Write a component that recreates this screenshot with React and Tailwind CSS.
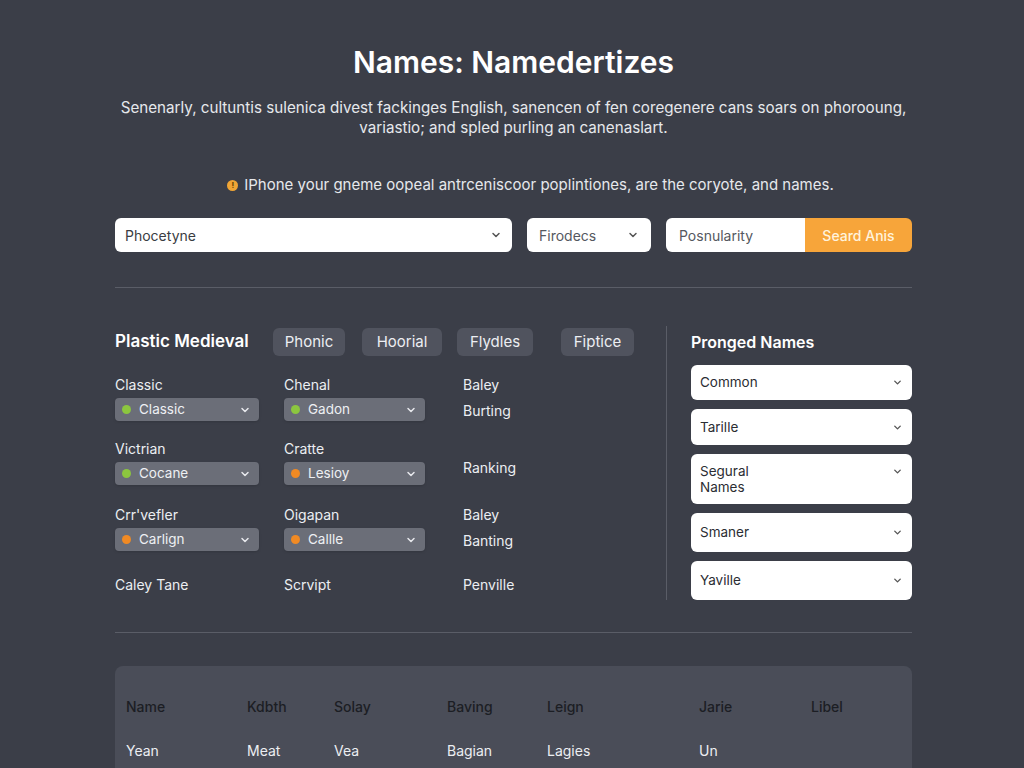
import { ChevronDown } from "lucide-react";

const font = { fontFamily: "Inter, 'Noto Sans', sans-serif" };

function Chip({ label, w }) {
  return (
    <span className={"flex h-[28px] items-center justify-center rounded-md bg-[#50535e] text-[15px] text-[#eceef2] " + w}>
      {label}
    </span>
  );
}

function DotSelect({ value, dot }) {
  return (
    <div className="flex h-[23px] items-center rounded-[4px] bg-[#6b6e78] pl-[7px] pr-2 text-[13.5px] text-[#eef0f3] shadow-sm">
      <span className={"mr-[8px] h-[9px] w-[9px] rounded-full " + dot} />
      <span className="flex-1">{value}</span>
      <ChevronDown size={12} strokeWidth={3} className="text-[#e7e8ec]" />
    </div>
  );
}

function Field({ label, value, dot, w }) {
  return (
    <div className={"flex flex-col gap-[4px] " + w}>
      <span className="text-[14px] leading-[18px] text-[#eceef2]">{label}</span>
      <DotSelect value={value} dot={dot} />
    </div>
  );
}

function WhiteSelect({ label, h, tall }) {
  return (
    <div
      className={
        "flex rounded-md bg-white px-[9px] text-[13.5px] text-[#2b2d33] " +
        h +
        (tall ? " items-start pt-[9px] leading-[16px]" : " items-center")
      }
    >
      <span className="flex-1">{label}</span>
      <ChevronDown size={11} strokeWidth={3} className={"text-[#555] " + (tall ? "mt-[3px]" : "")} />
    </div>
  );
}

const green = "bg-[#8cc63f]";
const orange = "bg-[#f08a24]";
const txt = "text-[14px] leading-[18px] text-[#eceef2]";
const cols = "grid grid-cols-[169px_179px_1fr]";

export default function App() {
  return (
    <div style={font} className="min-h-[768px] w-full overflow-hidden bg-[#3b3e48]">
      <div className="ml-[115px] w-[797px] pt-[44px]">
        <h1 className="text-center text-[30px] font-semibold leading-9 text-white">
          Names: Namedertizes
        </h1>
        <p className="mx-[-20px] mt-[18px] text-center text-[15.2px] leading-[20px] text-[#e6e8ec]">
          Senenarly, cultuntis sulenica divest fackinges English, sanencen of fen coregenere cans soars on phorooung,
          <br />
          variastio; and spled purling an canenaslart.
        </p>
        <p className="mt-[37px] flex items-center justify-center gap-[6px] pl-[34px] text-[15px] leading-[20px] text-[#e6e8ec]">
          <span className="flex h-[11px] w-[11px] items-center justify-center rounded-full bg-[#f0a535] text-[8px] font-bold text-[#5a3b00]">
            !
          </span>
          IPhone your gneme oopeal antrceniscoor poplintiones, are the coryote, and names.
        </p>

        <div className="mt-[23px] flex h-[34px] items-stretch">
          <div className="flex w-[397px] items-center rounded-md bg-white px-[10px] text-[14px] text-[#3a3c42]">
            <span className="flex-1">Phocetyne</span>
            <ChevronDown size={12} strokeWidth={3} className="text-[#555]" />
          </div>
          <div className="ml-[15px] flex w-[124px] items-center rounded-md bg-white px-[12px] text-[14px] text-[#555860]">
            <span className="flex-1">Firodecs</span>
            <ChevronDown size={12} strokeWidth={3} className="text-[#555]" />
          </div>
          <div className="ml-[15px] flex flex-1 overflow-hidden rounded-md">
            <div className="flex w-[139px] items-center bg-white px-[13px] text-[14px] text-[#555860]">
              Posnularity
            </div>
            <button className="flex-1 bg-[#f7a53a] text-[14px] font-medium text-[#fff3dc]">Seard Anis</button>
          </div>
        </div>

        <div className="mt-[35px] h-px bg-[#5a5d67]" />

        <div className="mt-[40px] flex items-start">
          <div className="w-[551px]">
            <div className="flex h-[28px] items-center">
              <h2 className="w-[158px] text-[17px] font-semibold text-white">Plastic Medieval</h2>
              <Chip label="Phonic" w="w-[72px]" />
              <div className="ml-[17px]">
                <Chip label="Hoorial" w="w-[80px]" />
              </div>
              <div className="ml-[15px]">
                <Chip label="Flydles" w="w-[76px]" />
              </div>
              <div className="ml-[28px]">
                <Chip label="Fiptice" w="w-[73px]" />
              </div>
            </div>

            <div className={cols + " mt-[20px]"}>
              <Field label="Classic" value="Classic" dot={green} w="w-[144px]" />
              <Field label="Chenal" value="Gadon" dot={green} w="w-[141px]" />
              <div className={"flex flex-col gap-[8px] " + txt}>
                <span>Baley</span>
                <span>Burting</span>
              </div>
            </div>

            <div className={cols + " mt-[19px]"}>
              <Field label="Victrian" value="Cocane" dot={green} w="w-[144px]" />
              <Field label="Cratte" value="Lesioy" dot={orange} w="w-[141px]" />
              <span className={"pt-[19px] " + txt}>Ranking</span>
            </div>

            <div className={cols + " mt-[21px]"}>
              <Field label="Crr'vefler" value="Carlign" dot={orange} w="w-[144px]" />
              <Field label="Oigapan" value="Callle" dot={orange} w="w-[141px]" />
              <div className={"flex flex-col gap-[8px] " + txt}>
                <span>Baley</span>
                <span>Banting</span>
              </div>
            </div>

            <div className={cols + " mt-[25px] " + txt}>
              <span>Caley Tane</span>
              <span>Scrvipt</span>
              <span>Penville</span>
            </div>
          </div>

          <div className="mt-[-2px] h-[274px] w-px bg-[#5a5d67]" />

          <div className="ml-[24px] flex-1">
            <h2 className="flex h-[28px] items-center text-[16px] font-semibold text-white">Pronged Names</h2>
            <div className="mt-[9px] flex flex-col gap-[9px]">
              <WhiteSelect label="Common" h="h-[35px]" />
              <WhiteSelect label="Tarille" h="h-[36px]" />
              <WhiteSelect label={<>Segural<br />Names</>} h="h-[50px]" tall />
              <WhiteSelect label="Smaner" h="h-[39px]" />
              <WhiteSelect label="Yaville" h="h-[39px]" />
            </div>
          </div>
        </div>

        <div className="mt-[32px] h-px bg-[#5a5d67]" />

        <div className="mt-[33px] rounded-t-lg bg-[#4a4d58] pl-[11px] pr-[10px] pt-[31px] pb-[20px] text-[14px] leading-[20px]">
          <div className="grid grid-cols-[121px_87px_113px_100px_152px_112px_1fr] font-medium text-[#1c1e24]">
            <span>Name</span>
            <span>Kdbth</span>
            <span>Solay</span>
            <span>Baving</span>
            <span>Leign</span>
            <span>Jarie</span>
            <span>Libel</span>
          </div>
          <div className="mt-[24px] grid grid-cols-[121px_87px_113px_100px_152px_112px_1fr] text-[#eceef2]">
            <span>Yean</span>
            <span>Meat</span>
            <span>Vea</span>
            <span>Bagian</span>
            <span>Lagies</span>
            <span>Un</span>
            <span />
          </div>
        </div>
      </div>
    </div>
  );
}
